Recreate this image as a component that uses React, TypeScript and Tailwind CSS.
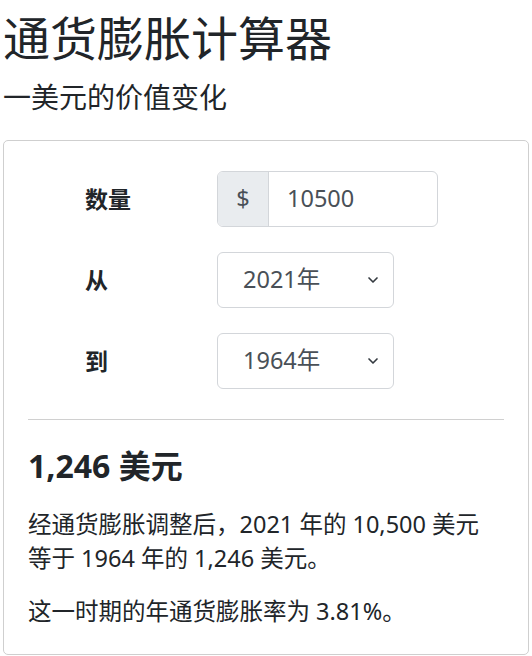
import { ChevronDown } from "lucide-react";

const font = {
  fontFamily: '"Noto Sans", "Noto Sans CJK SC", sans-serif',
};

const years = ["2021年", "1964年"];

function YearSelect({ value }: { value: string }) {
  return (
    <div className="relative w-[177px]">
      <select
        defaultValue={value}
        className="h-[56px] w-full appearance-none rounded-[6px] border border-[#d3d6da] bg-white pl-[25px] text-[23.5px] text-[#495057] outline-none"
      >
        {years.map((y) => (
          <option key={y}>{y}</option>
        ))}
      </select>
      <ChevronDown
        className="pointer-events-none absolute right-[13px] top-[20px] text-[#343a40]"
        size={16}
        strokeWidth={2.5}
      />
    </div>
  );
}

export default function App() {
  const rows = [
    { label: "从", value: "2021年" },
    { label: "到", value: "1964年" },
  ];

  return (
    <div className="min-h-[656px] bg-white px-[3px] text-[#212529]" style={font}>
      <h1 className="pt-[10px] text-[47px] leading-[1.2] font-normal">通货膨胀计算器</h1>
      <h2 className="mt-[15px] text-[28px] leading-[1.2] font-normal">一美元的价值变化</h2>

      <div className="mt-[25px] w-[526px] rounded-[5px] border border-[#cfcfcf] px-[24px] pt-[30px] pb-[26px]">
        <div className="flex flex-col gap-[25px]">
          <div className="flex items-center">
            <div className="w-[189px] pl-[57px] text-[23px] font-bold">数量</div>
            <div className="flex h-[56px] w-[221px] overflow-hidden rounded-[6px] border border-[#d3d6da]">
              <span className="flex w-[51px] items-center justify-center border-r border-[#d3d6da] bg-[#e9ecef] text-[23.5px] text-[#495057]">
                $
              </span>
              <input
                defaultValue="10500"
                className="min-w-0 flex-1 pl-[18px] text-[23.5px] text-[#495057] outline-none"
              />
            </div>
          </div>
          {rows.map((r) => (
            <div key={r.label} className="flex items-center">
              <div className="w-[189px] pl-[57px] text-[23px] font-bold">{r.label}</div>
              <YearSelect value={r.value} />
            </div>
          ))}
        </div>

        <hr className="mt-[30px] border-t border-[#d0d0d0]" />

        <div className="mt-[27px] text-[32px] leading-[1.2] font-bold">1,246 美元</div>
        <p className="mt-[22px] max-w-[465px] text-[23.5px] leading-[34px]">
          经通货膨胀调整后，2021 年的 10,500 美元等于 1964 年的 1,246 美元。
        </p>
        <p className="mt-[19px] text-[23.5px] leading-[34px]">这一时期的年通货膨胀率为 3.81%。</p>
      </div>
    </div>
  );
}
